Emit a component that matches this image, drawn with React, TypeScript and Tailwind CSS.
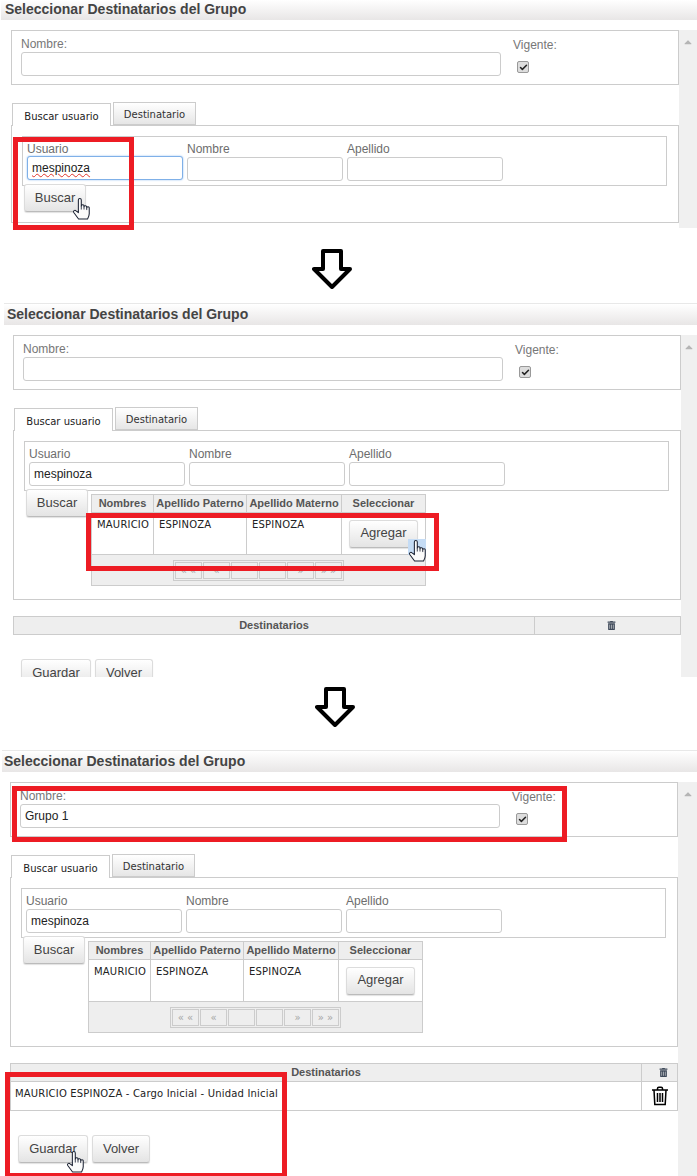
import type { ReactNode } from "react";
import { Check } from "lucide-react";
import { FaTrashAlt, FaCaretUp } from "react-icons/fa";

const verdana = "font-['DejaVu_Sans',sans-serif]";

function HandCursor({ className }: { className: string }) {
  return (
    <svg viewBox="0 0 18 22" className={`absolute h-[23px] w-[19px] ${className}`}>
      <path
        d="M6 15V2.8a1.4 1.4 0 0 1 2.8 0V8.5a1.3 1.3 0 0 1 2.6.3v.6a1.3 1.3 0 0 1 2.6.4v.6a1.2 1.2 0 0 1 2.4.2V16c0 2-.8 3.5-1.6 5H6.2L1.6 14.8c-1-1.5 1-2.8 2.2-1.6Z"
        fill="#fbfbfb"
        stroke="#1b2233"
        strokeWidth="1"
        strokeLinejoin="round"
      />
      <path d="M8.8 8.5V12M11.4 9.2V12M14 10.4V12.5" stroke="#1b2233" strokeWidth="0.8" fill="none" />
    </svg>
  );
}

function DownArrow() {
  return (
    <svg viewBox="0 0 40 40" className="h-10 w-10">
      <polygon
        points="11,2 29,2 29,20 38,20 20,38 2,20 11,20"
        fill="#fff"
        stroke="#000"
        strokeWidth="4"
        strokeLinejoin="round"
      />
    </svg>
  );
}

function RedBox({ className }: { className: string }) {
  return <div className={`absolute border-[5px] border-[#ed1c24] ${className}`} />;
}

function Btn({ width, children }: { width: string; children: ReactNode }) {
  return (
    <button
      className={`h-7 shrink-0 rounded-[3px] border border-[#dcdcdc] border-b-[#bbb] bg-gradient-to-b from-white to-[#e4e4e4] pb-px text-[13px] text-[#444] shadow-[0_1px_1px_rgba(0,0,0,0.12)] ${width}`}
    >
      {children}
    </button>
  );
}

function TextInput({ value, width, className = "" }: { value?: string; width: string; className?: string }) {
  return (
    <input
      readOnly
      value={value ?? ""}
      className={`h-6 rounded-[3px] border border-[#ccc] bg-white px-1 text-xs text-[#222] outline-none ${width} ${className}`}
    />
  );
}

function SearchField({ label, value, focused }: { label: string; value?: string; focused?: boolean }) {
  return (
    <div className="w-[156px]">
      <div className="h-[16px] pt-[2px] text-xs leading-[15px] text-[#6d6d6d]">{label}</div>
      {focused ? (
        // el subrayado del corrector no se pinta sobre un input
        <div className="flex h-6 w-[156px] items-center rounded-[3px] border border-[#7fb0e8] bg-white px-1 text-xs text-[#222] shadow-[0_0_2px_#8fbcf0]">
          <span className="underline decoration-[#e0352b] decoration-wavy decoration-1">{value}</span>
        </div>
      ) : (
        <TextInput value={value} width="w-[156px]" />
      )}
    </div>
  );
}

function ResultsTable() {
  const pages = ["« «", "«", "", "", "»", "» »"];
  return (
    <table className="mt-[5px] h-[91px] w-[334px] table-fixed border-collapse">
      <colgroup>
        <col className="w-[62px]" />
        <col className="w-[93px]" />
        <col className="w-[95px]" />
        <col className="w-[84px]" />
      </colgroup>
      <thead>
        <tr className="h-[18px] bg-[#eee] text-[11px] font-bold text-[#555]">
          <th className="border border-[#ccc] p-0">Nombres</th>
          <th className="border border-[#ccc] p-0">Apellido Paterno</th>
          <th className="border border-[#ccc] p-0">Apellido Materno</th>
          <th className="border border-[#ccc] p-0">Seleccionar</th>
        </tr>
      </thead>
      <tbody className={`text-[10px] tracking-[0.2px] text-[#222] ${verdana}`}>
        <tr className="h-[42px]">
          <td className="border border-[#ccc] pb-[19px] pl-[5px]">MAURICIO</td>
          <td className="border border-[#ccc] pb-[19px] pl-[5px]">ESPINOZA</td>
          <td className="border border-[#ccc] pb-[19px] pl-[5px]">ESPINOZA</td>
          <td className="border border-[#ccc] pl-[7px] font-['Liberation_Sans',sans-serif] tracking-normal">
            <Btn width="w-[69px]">Agregar</Btn>
          </td>
        </tr>
        <tr className="h-[31px] bg-[#eee]">
          <td colSpan={4} className="border border-[#ccc] p-0">
            <div className="mx-auto flex h-[21px] w-[171px] gap-px border border-[#ccc] p-px">
              {pages.map((p, i) => (
                <span
                  key={i}
                  className="flex h-full w-[27px] items-center justify-center border border-[#ccc] text-[10px] tracking-normal text-[#a5a5a5]"
                >
                  {p}
                </span>
              ))}
            </div>
          </td>
        </tr>
      </tbody>
    </table>
  );
}

function TrashBig() {
  return (
    <svg viewBox="0 0 18 20" className="h-5 w-[18px]">
      <path
        d="M1 4h16M3 4l.8 14.5h10.4L15 4M6.5 4V2.6C6.5 1.8 7 1.3 7.8 1.3h2.4c.8 0 1.3.5 1.3 1.3V4M6.5 7v9M9 7v9M11.5 7v9"
        fill="#fff"
        stroke="#000"
        strokeWidth="1.5"
      />
    </svg>
  );
}

function Screen(props: {
  height: string;
  barClass: string;
  contentClass: string;
  group?: string;
  results?: boolean;
  destWidth?: string;
  destRow?: boolean;
  footer?: boolean;
  children?: ReactNode;
}) {
  const { height, barClass, contentClass, group, results, destWidth, destRow, footer, children } = props;
  return (
    <div className="relative">
      <div className={`flex flex-col overflow-hidden ${height}`}>
        <div
          className={`flex shrink-0 items-center bg-gradient-to-b from-white to-[#e8e6e6] pb-[2px] text-sm font-bold text-[#444] ${barClass}`}
        >
          Seleccionar Destinatarios del Grupo
        </div>
        <div className="mt-[10px] flex min-h-0 flex-1">
          <div className={`w-[668px] shrink-0 ${contentClass}`}>
            <div className="flex h-[55px] border border-[#ccc] px-[9px] pt-[6px]">
              <div className="w-[480px]">
                <div className="h-[14px] text-xs leading-[15px] text-[#777]">Nombre:</div>
                <TextInput value={group} width="w-[480px]" className="px-[4px]" />
              </div>
              <div className="ml-3">
                <div className="h-[15px] text-xs leading-[17px] text-[#777]">Vigente:</div>
                <div className="ml-1 mt-[9px] flex h-3 w-3 items-center justify-center rounded-[2px] border border-[#999] bg-[#ddd]">
                  <Check size={9} strokeWidth={4} className="text-[#222]" />
                </div>
              </div>
            </div>

            <div className={`ml-px mt-[18px] flex h-[22px] items-start text-[10px] ${verdana}`}>
              <div className="relative z-10 flex h-[23px] w-[99px] items-center justify-center border border-b-0 border-[#ccc] bg-white pt-[3px] text-[#222]">
                Buscar usuario
              </div>
              <div className="-mt-px ml-[2px] flex h-[23px] w-[83px] items-center justify-center border border-[#ccc] bg-gradient-to-b from-white to-[#e6e6e6] pt-[2px] text-[#333]">
                Destinatario
              </div>
            </div>

            <div className="border border-[#ccc] pb-[10px] pl-[10px] pt-[10px]">
              <div className="flex h-[50px] w-[645px] gap-1 border border-[#ccc] pl-1 pt-[3px]">
                <SearchField label="Usuario" value="mespinoza" focused={!results} />
                <SearchField label="Nombre" />
                <SearchField label="Apellido" />
              </div>
              <div className="-mt-[2px] ml-[2px] flex items-start gap-[3px]">
                <Btn width="w-[62px]">Buscar</Btn>
                {results && <ResultsTable />}
              </div>
              {results && <div className="h-[3px]" />}
            </div>

            {destWidth && (
              <table className="mt-4 w-full table-fixed border-collapse text-[#222]">
                <colgroup>
                  <col className={destWidth} />
                  <col />
                </colgroup>
                <thead>
                  <tr className="h-[18px] bg-[#eee] text-[11px] font-bold text-[#555]">
                    <th className="border border-[#ccc] p-0">Destinatarios</th>
                    <th className="border border-[#ccc] p-0 pl-2">
                      <FaTrashAlt size={9} className="mx-auto text-[#3f4a5a]" />
                    </th>
                  </tr>
                </thead>
                {destRow && (
                  <tbody>
                    <tr className="h-[29px]">
                      <td className={`border border-[#ccc] pb-[5px] pl-1 text-[10px] tracking-[0.18px] ${verdana}`}>
                        MAURICIO ESPINOZA - Cargo Inicial - Unidad Inicial
                      </td>
                      <td className="border border-[#ccc] p-0">
                        <div className="flex justify-center">
                          <TrashBig />
                        </div>
                      </td>
                    </tr>
                  </tbody>
                )}
              </table>
            )}

            {footer && (
              <div className="ml-2 mt-6 flex gap-1">
                <Btn width="w-[70px]">Guardar</Btn>
                <Btn width="w-[58px]">Volver</Btn>
              </div>
            )}
          </div>
          <div className="flex-1 bg-[#f0f0f0] pt-[6px]">
            <FaCaretUp size={12} className="mx-auto text-[#b5b5b5]" />
          </div>
        </div>
      </div>
      {children}
    </div>
  );
}

export default function App() {
  return (
    <div className="h-[1176px] w-[697px] overflow-hidden bg-white font-['Liberation_Sans',sans-serif]">
      <Screen height="h-[228px]" barClass="ml-px h-5 pl-1" contentClass="ml-[11px]">
        <RedBox className="left-[13px] top-[137px] h-[93px] w-[121px]" />
        <HandCursor className="left-[72px] top-[197px]" />
      </Screen>

      <div className="h-[75px] pl-[312px] pt-[21px]">
        <DownArrow />
      </div>

      <Screen
        height="h-[374px]"
        barClass="ml-1 h-[22px] border-t border-[#e8e8e8] pl-[3px]"
        contentClass="ml-[13px]"
        results
        destWidth="w-[521px]"
        footer
      >
        <div className="absolute left-[408px] top-[236px] h-4 w-[18px] bg-[#c5dcf5]" />
        <RedBox className="left-[86px] top-[210px] h-[58px] w-[353px]" />
        <HandCursor className="left-[408px] top-[236px]" />
      </Screen>

      <div className="h-[73px] pl-[315px] pt-[10px]">
        <DownArrow />
      </div>

      <Screen
        height="h-[426px]"
        barClass="ml-[2px] h-[22px] border-t border-[#e8e8e8] pl-[2px]"
        contentClass="ml-[10px]"
        group="Grupo 1"
        results
        destWidth="w-[631px]"
        destRow
        footer
      >
        <RedBox className="left-[12px] top-[36px] h-[56px] w-[555px]" />
        <RedBox className="left-[5px] top-[322px] h-[104px] w-[282px] border-b-[3px]" />
        <HandCursor className="left-[66px] top-[400px]" />
      </Screen>
    </div>
  );
}
